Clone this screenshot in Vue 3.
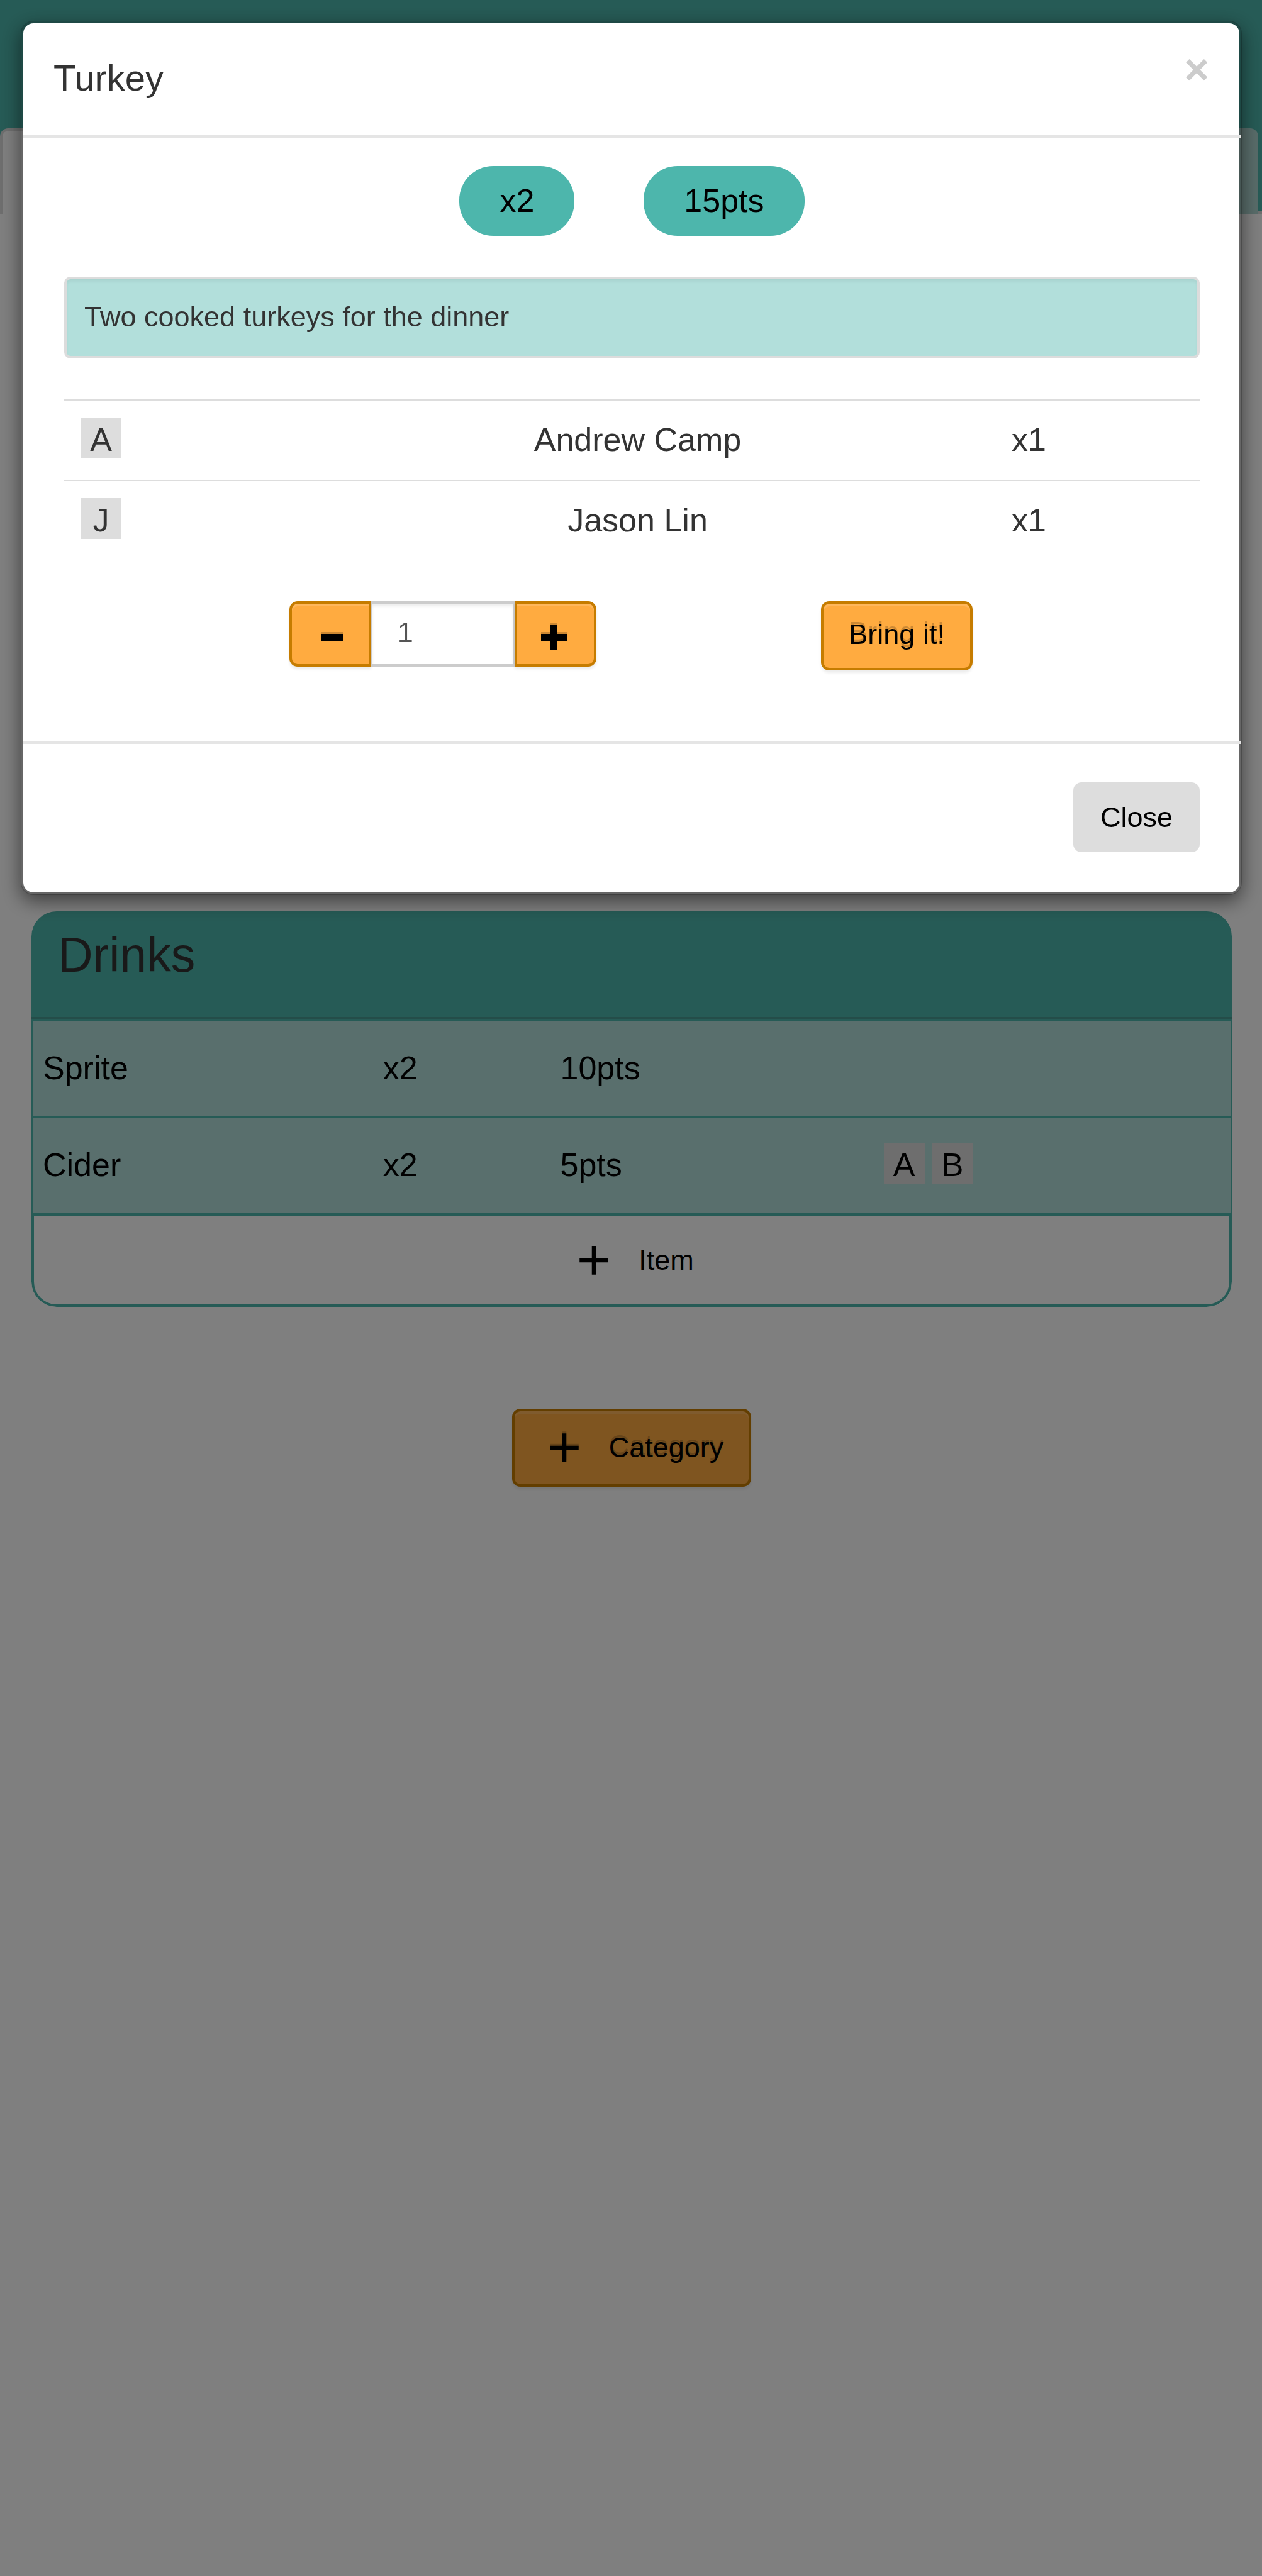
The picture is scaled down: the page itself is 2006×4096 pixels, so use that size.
<script setup>
import { ref } from 'vue'

const quantity = ref('1')

const people = [
  { initial: 'A', name: 'Andrew Camp', count: 'x1' },
  { initial: 'J', name: 'Jason Lin', count: 'x1' },
]

const drinks = [
  { name: 'Sprite', count: 'x2', points: '10pts', claimed: [] },
  { name: 'Cider', count: 'x2', points: '5pts', claimed: ['A', 'B'] },
]

function step(delta) {
  quantity.value = String(Math.max(1, Number(quantity.value) + delta))
}
</script>

<template>
  <div class="page">
    <header class="topbar">
      <nav class="tabs">
        <div class="tab tab-active"></div>
        <div class="tab"></div>
      </nav>
    </header>

    <main class="content">
      <section class="category">
        <h2 class="category-title">Drinks</h2>
        <table class="items">
          <colgroup>
            <col class="col-name" />
            <col class="col-count" />
            <col class="col-points" />
            <col />
          </colgroup>
          <tbody>
            <tr v-for="item in drinks" :key="item.name">
              <td>{{ item.name }}</td>
              <td>{{ item.count }}</td>
              <td>{{ item.points }}</td>
              <td><span v-for="who in item.claimed" :key="who" class="initial">{{ who }}</span></td>
            </tr>
          </tbody>
        </table>
        <button type="button" class="add-item">
          <svg class="add-icon" viewBox="0 0 24 24" aria-hidden="true">
            <path d="M19 13h-6v6h-2v-6H5v-2h6V5h2v6h6v2z" />
          </svg>
          <span>Item</span>
        </button>
      </section>

      <button type="button" class="orange add-category">
        <svg class="add-icon" viewBox="0 0 24 24" aria-hidden="true">
          <path d="M19 13h-6v6h-2v-6H5v-2h6V5h2v6h6v2z" />
        </svg>
        <span>Category</span>
      </button>
    </main>

    <div class="backdrop">
      <div class="modal" role="dialog" aria-labelledby="modal-title">
        <div class="modal-header">
          <h4 id="modal-title" class="modal-title">Turkey</h4>
          <button type="button" class="dismiss" aria-label="Dismiss">×</button>
        </div>

        <div class="modal-body">
          <div class="pills">
            <span class="pill">x2</span>
            <span class="pill">15pts</span>
          </div>

          <div class="well">Two cooked turkeys for the dinner</div>

          <table class="people">
            <colgroup>
              <col class="col-initial" />
              <col class="col-person" />
              <col />
            </colgroup>
            <tbody>
              <tr v-for="person in people" :key="person.name">
                <td><span class="initial">{{ person.initial }}</span></td>
                <td class="person-name">{{ person.name }}</td>
                <td>{{ person.count }}</td>
              </tr>
            </tbody>
          </table>

          <div class="controls">
            <div class="stepper">
              <button type="button" class="orange step step-left" aria-label="Less" @click="step(-1)">
                <svg class="step-icon" viewBox="0 0 47 47" aria-hidden="true">
                  <path d="M9 19h35v11H9z" />
                </svg>
              </button>
              <input v-model="quantity" class="quantity" type="text" aria-label="Quantity" />
              <button type="button" class="orange step step-right" aria-label="More" @click="step(1)">
                <svg class="step-icon" viewBox="0 0 47 47" aria-hidden="true">
                  <path d="M16 4h11v15h15v11H27v15H16V30H1V19h15z" />
                </svg>
              </button>
            </div>
            <div>
              <button type="button" class="orange bring">Bring it!</button>
            </div>
          </div>
        </div>

        <div class="modal-footer">
          <button type="button" class="close">Close</button>
        </div>
      </div>
    </div>
  </div>
</template>

<style>
body {
  margin: 0;
  background: #fff;
}
</style>

<style scoped>
.page,
.page * {
  box-sizing: border-box;
}

.page {
  min-height: 100vh;
  font-family: "Liberation Sans", Arial, Helvetica, sans-serif;
  font-size: 45px;
  color: #333;
}

button,
input {
  margin: 0;
  font-family: inherit;
  font-size: 45px;
}

button {
  cursor: pointer;
}

/* Page behind the dialog */

.topbar {
  padding: 204px 6px 0 0;
  background: #4db6ac;
  border-bottom: 4px solid #ddd;
}

.tabs {
  display: flex;
  margin-bottom: -4px;
}

.tab {
  flex: 1;
  height: 136px;
  border-radius: 13px 13px 0 0;
  background: #b2d9d4;
}

.tab-active {
  background: #fff;
  border: 4px solid #ddd;
  border-bottom: 0;
}

.content {
  padding: 1109px 48px 0 50px;
}

.category {
  overflow: hidden;
  border-radius: 40px;
}

.category-title {
  margin: 0;
  padding: 25px 42px 55px;
  font-size: 77px;
  font-weight: 400;
  line-height: 88px;
  background: #4db6ac;
  border-bottom: 4px solid #489b92;
}

.items {
  width: 100%;
  table-layout: fixed;
  border-collapse: separate;
  border-spacing: 0;
  border: 2px solid #4db6ac;
  border-bottom: 0;
  background: #b2dfdb;
  color: #000;
}

.items td {
  padding: 38px 16px 40px;
  font-size: 52px;
  line-height: 74px;
}

.items tr + tr td {
  border-top: 2px solid #4db6ac;
}

.col-name {
  width: 28.4%;
}

.col-count {
  width: 14.8%;
}

.col-points {
  width: 27%;
}

.initial {
  display: inline-block;
  width: 65px;
  padding-top: 6px;
  font-size: 52px;
  line-height: 59px;
  text-align: center;
  background: #ddd;
}

.initial + .initial {
  margin-left: 12px;
}

.add-item {
  display: flex;
  width: 100%;
  height: 149px;
  align-items: center;
  justify-content: center;
  gap: 32px;
  padding: 0;
  color: #000;
  background: #fff;
  border: 4px solid #4db6ac;
  border-radius: 0 0 40px 40px;
}

.add-icon {
  width: 78px;
  height: 78px;
}

.orange {
  color: #000;
  background: #ffab40;
  border: 4px solid #c67c00;
  border-radius: 13px;
  text-shadow: 0 -4px 0 rgba(0, 0, 0, 0.2);
  box-shadow: inset 0 4px 0 rgba(255, 255, 255, 0.15), 0 4px 4px rgba(0, 0, 0, 0.075);
}

.orange svg {
  filter: drop-shadow(0 -3px 0 rgba(0, 0, 0, 0.2));
}

.add-category {
  display: flex;
  height: 124px;
  align-items: center;
  gap: 32px;
  margin: 162px auto 0;
  padding: 0 40px;
}

/* Dialog */

.backdrop {
  position: fixed;
  inset: 0;
  padding: 33px 32px 0 33px;
  background: rgba(0, 0, 0, 0.5);
}

.modal {
  background: #fff;
  background-clip: padding-box;
  border: 4px solid rgba(0, 0, 0, 0.2);
  border-radius: 20px;
  box-shadow: 0 10px 30px rgba(0, 0, 0, 0.5);
}

.modal-header {
  display: flex;
  justify-content: space-between;
  align-items: flex-start;
  margin-right: -2px;
  padding: 50px 50px 54px 48px;
  border-bottom: 4px solid #e5e5e5;
}

.modal-title {
  margin: 0;
  font-size: 58px;
  font-weight: 400;
  line-height: 74px;
}

.dismiss {
  padding: 0;
  font-size: 68px;
  font-weight: 700;
  line-height: 46px;
  color: #ccc;
  background: none;
  border: 0;
}

.modal-body {
  padding: 45px 63px 113px 65px;
}

.pills {
  display: flex;
  justify-content: center;
  gap: 110px;
}

.pill {
  padding: 0 64px;
  font-size: 52px;
  line-height: 111px;
  color: #000;
  background: #4db6ac;
  border-radius: 54px;
}

.well {
  margin-top: 65px;
  padding: 29px 28px 31px;
  line-height: 62px;
  background: #b2dfdb;
  border: 4px solid #dcdcdc;
  border-radius: 10px;
  box-shadow: inset 0 4px 4px rgba(0, 0, 0, 0.05);
}

.people {
  width: 100%;
  margin-top: 65px;
  table-layout: fixed;
  border-collapse: separate;
  border-spacing: 0;
}

.people td {
  padding: 25px 26px 27px;
  font-size: 52px;
  line-height: 74px;
  border-top: 2px solid #ddd;
}

.col-initial {
  width: 19%;
}

.col-person {
  width: 63%;
}

.people .person-name {
  text-align: center;
}

.controls {
  display: grid;
  grid-template-columns: 2fr 1fr;
  margin-top: 65px;
}

.stepper {
  display: flex;
  justify-content: center;
  align-items: flex-start;
}

.step {
  display: flex;
  width: 130px;
  height: 104px;
  align-items: center;
  justify-content: center;
  padding: 8px 0 0;
}

.step-left {
  border-radius: 13px 0 0 13px;
}

.step-right {
  border-radius: 0 13px 13px 0;
}

.step-icon {
  width: 47px;
  height: 47px;
}

.quantity {
  width: 228px;
  height: 104px;
  padding: 0 40px 4px;
  color: #555;
  background: #fff;
  border: 4px solid #ccc;
  border-width: 4px 2px;
  border-radius: 0;
  box-shadow: inset 0 4px 4px rgba(0, 0, 0, 0.075);
}

.bring {
  padding: 20px 40px 24px;
  line-height: 58px;
}

.modal-footer {
  display: flex;
  justify-content: flex-end;
  margin-right: -2px;
  padding: 61px 65px 64px;
  border-top: 4px solid #e5e5e5;
}

.close {
  padding: 0 43px;
  line-height: 111px;
  color: #000;
  background: #ddd;
  border: 0;
  border-radius: 13px;
}
</style>
